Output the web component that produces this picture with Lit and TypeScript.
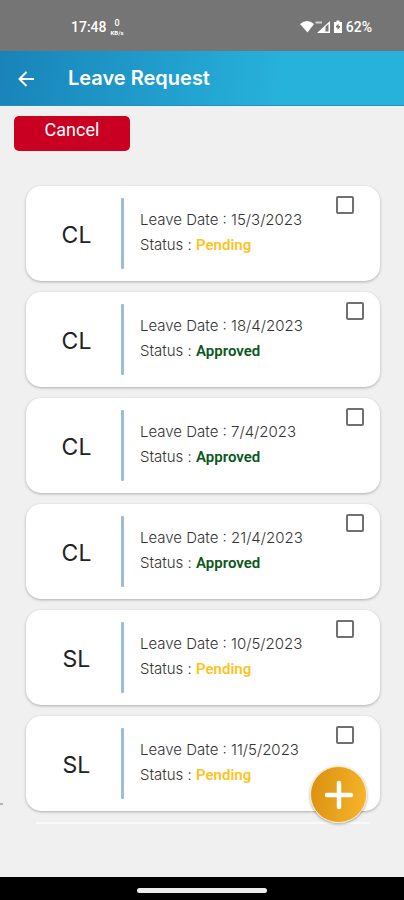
import { LitElement, html, css } from "lit";
import { customElement, property, state } from "lit/decorators.js";
import { classMap } from "lit/directives/class-map.js";

interface Leave {
  type: string;
  date: string;
  status: "Pending" | "Approved";
}

@customElement("status-bar")
class StatusBar extends LitElement {
  static styles = css`
    :host {
      display: flex;
      align-items: center;
      height: 51px;
      padding: 2px 32px 0 71px;
      box-sizing: border-box;
      background: #757575;
      color: #fff;
      font: 500 14px/16px Roboto, sans-serif;
    }
    .speed {
      display: flex;
      flex-direction: column;
      align-items: center;
      margin-left: 4px;
      font-size: 9px;
      line-height: 11px;
    }
    .unit {
      font-size: 6px;
      line-height: 7px;
      font-weight: 700;
    }
    .icons {
      margin-left: auto;
      margin-right: 4px;
    }
    svg {
      display: block;
    }
  `;

  render() {
    return html`
      <span>17:48</span>
      <span class="speed"><span>0</span><span class="unit">KB/s</span></span>
      <span class="icons">
        <svg width="42" height="14" viewBox="0 0 42 14" fill="#fff" aria-hidden="true">
          <path d="M0 4Q7-2 14 4L7.500 12.500Z" />
          <path d="M17 13L30 1V13Z" />
          <path d="M25.500 6.800L28.500 4V11.500H25.500Z" fill="#757575" />
          <path d="M15.500 1.500H22V3.500H15.500Z" opacity=".65" />
          <path d="M36.500 0.500H39.500V2H42V13H34V2H36.500Z" />
          <path d="M38.500 3.500V6H40V7.200L37.500 10V7.500H36V6.200Z" fill="#757575" />
        </svg>
      </span>
      <span>62%</span>
    `;
  }
}

@customElement("leave-card")
class LeaveCard extends LitElement {
  @property({ attribute: false }) leave!: Leave;

  static styles = css`
    :host {
      display: block;
    }
    .card {
      display: grid;
      grid-template-columns: 95px 3px 1fr auto;
      height: 95px;
      box-sizing: border-box;
      border-radius: 15px;
      background: #fff;
      box-shadow: 0 1px 3px rgba(0, 0, 0, 0.28);
      font-family: Inter, sans-serif;
    }
    .type {
      align-self: center;
      padding: 2px 0 0 6px;
      text-align: center;
      font-size: 23px;
      line-height: 28px;
      color: #222;
    }
    .rule {
      align-self: center;
      height: 71px;
      border-radius: 1px;
      background: #9dbdd6;
    }
    .details {
      padding: 21px 0 0 16px;
      font-size: 15px;
      font-weight: 300;
      line-height: 25px;
      color: #333;
      white-space: nowrap;
    }
    .details p {
      margin: 0;
    }
    .value {
      font-family: Roboto, sans-serif;
      font-weight: 600;
      color: #ffc31f;
    }
    .approved .value {
      color: #0b5720;
    }
    .pick {
      appearance: none;
      width: 18px;
      height: 18px;
      margin: 10px 26px 0 0;
      border: 2px solid #707070;
      border-radius: 2px;
      background: #fff;
    }
    .approved .pick {
      margin-right: 16px;
    }
    .pick:checked {
      background: #1e8fc2;
    }
  `;

  render() {
    const { type, date, status } = this.leave;
    return html`
      <article class=${classMap({ card: true, approved: status === "Approved" })}>
        <div class="type">${type}</div>
        <div class="rule"></div>
        <div class="details">
          <p>Leave Date : ${date}</p>
          <p>Status : <span class="value">${status}</span></p>
        </div>
        <input class="pick" type="checkbox" aria-label="Select ${type} ${date}" />
      </article>
    `;
  }
}

@customElement("app-root")
class AppRoot extends LitElement {
  @state() private leaves: Leave[] = [
    { type: "CL", date: "15/3/2023", status: "Pending" },
    { type: "CL", date: "18/4/2023", status: "Approved" },
    { type: "CL", date: "7/4/2023", status: "Approved" },
    { type: "CL", date: "21/4/2023", status: "Approved" },
    { type: "SL", date: "10/5/2023", status: "Pending" },
    { type: "SL", date: "11/5/2023", status: "Pending" },
  ];

  static styles = css`
    :host {
      position: relative;
      display: flex;
      flex-direction: column;
      min-height: 100vh;
      background: #f0f0f0;
    }
    button {
      padding: 0;
      border: 0;
      cursor: pointer;
    }
    svg {
      display: block;
    }
    header {
      display: flex;
      align-items: center;
      gap: 32px;
      height: 55px;
      box-sizing: border-box;
      padding-left: 16px;
      border-bottom: 1px solid #1a94bd;
      background: linear-gradient(100deg, #1883b8 0%, #27b2dc 70%, #27b2dc 100%);
      color: #fff;
    }
    .back {
      background: none;
      color: inherit;
    }
    h1 {
      margin: 0;
      font: 600 20px/26px Inter, sans-serif;
    }
    main {
      flex: 1;
      padding: 10px 24px 0 26px;
    }
    .cancel {
      display: block;
      width: 116px;
      height: 35px;
      margin-left: -12px;
      padding-bottom: 8px;
      border-radius: 5px;
      background: #c90022;
      color: #fff;
      font: 400 18px/24px Roboto, sans-serif;
    }
    .list {
      display: flex;
      flex-direction: column;
      gap: 11px;
      margin-top: 35px;
    }
    .more {
      height: 2px;
      margin: 0 10px;
      background: #f9f9f9;
    }
    .edge {
      position: absolute;
      left: 0;
      bottom: 95px;
      width: 3px;
      height: 2px;
      background: #b5b5b5;
    }
    .add {
      position: absolute;
      right: 37px;
      bottom: 77px;
      display: grid;
      place-items: center;
      width: 57px;
      height: 57px;
      border: 1px solid #f3e4c4;
      border-radius: 50%;
      background: linear-gradient(100deg, #d9900f, #f8b52b);
      box-shadow: 0 1px 3px rgba(0, 0, 0, 0.35);
    }
    footer {
      display: grid;
      place-items: center;
      height: 23px;
      box-sizing: border-box;
      padding-top: 3px;
      background: #000;
    }
    .pill {
      width: 32%;
      height: 5px;
      border-radius: 3px;
      background: #ececec;
    }
  `;

  render() {
    return html`
      <status-bar></status-bar>
      <header>
        <button class="back" aria-label="Back">
          <svg width="20" height="18" viewBox="0 0 20 18" fill="none" stroke="#fff" stroke-width="2">
            <path d="M18 10H4M10.500 3L3.500 10L10.500 17" />
          </svg>
        </button>
        <h1>Leave Request</h1>
      </header>
      <main>
        <button class="cancel">Cancel</button>
        <section class="list" aria-label="Leave requests">
          ${this.leaves.map((leave) => html`<leave-card .leave=${leave}></leave-card>`)}
          <div class="more"></div>
        </section>
      </main>
      <div class="edge"></div>
      <button class="add" aria-label="Add leave request">
        <svg width="30" height="30" viewBox="0 0 30 30" stroke="#fff" stroke-width="4.500" stroke-linecap="round">
          <path d="M15 3V27M3 15H27" />
        </svg>
      </button>
      <footer><div class="pill"></div></footer>
    `;
  }
}
